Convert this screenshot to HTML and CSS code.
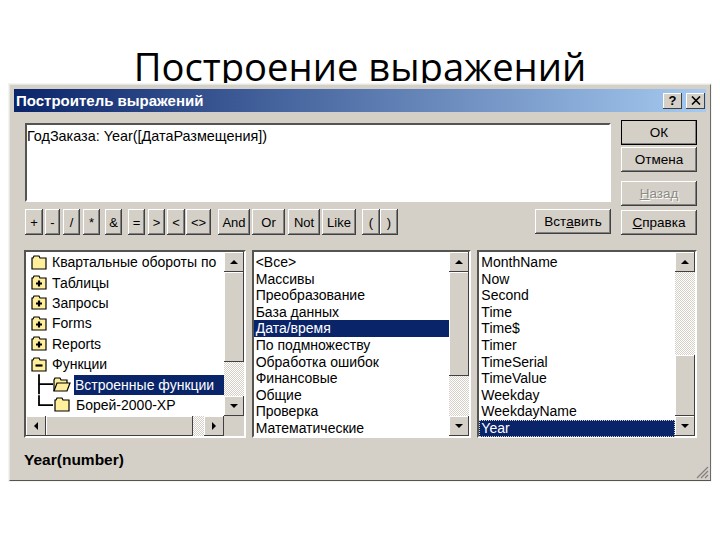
FILE: index.html
```html
<!DOCTYPE html>
<html lang="ru">
<head>
<meta charset="utf-8">
<title>Построение выражений</title>
<link rel="stylesheet" href="styles.css">
</head>
<body>
<header class="slide-head"><h1>Построение выражений</h1></header>
<section class="dialog">
  <div class="titlebar">
    <span class="title-text">Построитель выражений</span>
    <span class="cap-btn help">?</span>
    <span class="cap-btn close">
      <svg width="10" height="9" viewBox="0 0 10 9"><path d="M1 0.5 L9 8.5 M9 0.5 L1 8.5" stroke="#000" stroke-width="1.6"/></svg>
    </span>
  </div>
  <div class="client">
    <div class="top">
      <div class="editor-col">
        <div class="editor">ГодЗаказа: Year([ДатаРазмещения])</div>
        <div class="ops">
          <span class="op w18">+</span><span class="op w15 m2">-</span><span class="op w17 m3">/</span><span class="op w17 m3">*</span><span class="op w17 m5">&amp;</span><span class="op w17 m6">=</span><span class="op w17 m3">&gt;</span><span class="op w18 m2">&lt;</span><span class="op w25 m1">&lt;&gt;</span><span class="op w32 m7">And</span><span class="op w33 m2">Or</span><span class="op w32 m3">Not</span><span class="op w34 m2">Like</span><span class="op w18 m6">(</span><span class="op w18">)</span>
          <span class="btn insert">Вст<u>а</u>вить</span>
        </div>
      </div>
      <div class="side">
        <span class="btn default">ОК</span>
        <span class="btn">Отмена</span>
        <span class="btn disabled gap"><u>Н</u>азад</span>
        <span class="btn"><u>С</u>правка</span>
      </div>
    </div>
    <div class="lists">
      <div class="well tree-well">
        <div class="tree-body">
          <ul class="tree">
            <li><svg class="ic" viewBox="0 0 16 15"><path d="M1 14V3h1l1-2h5l1 2h6v11z" fill="#ffef9c" stroke="#000" stroke-width="1.2"/></svg>Квартальные обороты по</li>
            <li><svg class="ic" viewBox="0 0 16 15"><path d="M1 14V3h1l1-2h5l1 2h6v11z" fill="#ffef9c" stroke="#000" stroke-width="1.2"/><path d="M8 5.500v6M5 8.500h6" stroke="#000" stroke-width="2.200"/></svg>Таблицы</li>
            <li><svg class="ic" viewBox="0 0 16 15"><path d="M1 14V3h1l1-2h5l1 2h6v11z" fill="#ffef9c" stroke="#000" stroke-width="1.2"/><path d="M8 5.500v6M5 8.500h6" stroke="#000" stroke-width="2.200"/></svg>Запросы</li>
            <li><svg class="ic" viewBox="0 0 16 15"><path d="M1 14V3h1l1-2h5l1 2h6v11z" fill="#ffef9c" stroke="#000" stroke-width="1.2"/><path d="M8 5.500v6M5 8.500h6" stroke="#000" stroke-width="2.200"/></svg>Forms</li>
            <li><svg class="ic" viewBox="0 0 16 15"><path d="M1 14V3h1l1-2h5l1 2h6v11z" fill="#ffef9c" stroke="#000" stroke-width="1.2"/><path d="M8 5.500v6M5 8.500h6" stroke="#000" stroke-width="2.200"/></svg>Reports</li>
            <li><svg class="ic" viewBox="0 0 16 15"><path d="M1 14V3h1l1-2h5l1 2h6v11z" fill="#ffef9c" stroke="#000" stroke-width="1.2"/><path d="M4.500 8.500h7" stroke="#000" stroke-width="2.200"/></svg>Функции</li>
            <li class="sub"><svg class="branch" viewBox="0 0 15 20"><path d="M1 0v20M1 10h14" stroke="#000" stroke-width="1.800" fill="none"/></svg><svg class="ic" viewBox="0 0 18 15"><path d="M1 14V3l1-2h5l1 2h6v3" fill="#ffef9c" stroke="#000" stroke-width="1.200"/><path d="M1 14l3-8h13l-3 8z" fill="#ffef9c" stroke="#000" stroke-width="1.200"/></svg><span class="sel">Встроенные функции</span></li>
            <li class="sub"><svg class="branch" viewBox="0 0 15 20"><path d="M1 0v10h14" stroke="#000" stroke-width="1.800" fill="none"/></svg><svg class="ic" viewBox="0 0 18 15"><path d="M2 14V3h1l1-2h5l1 2h6v11z" fill="#ffef9c" stroke="#000" stroke-width="1.200"/></svg><span class="plain">Борей-2000-ХР</span></li>
          </ul>
          <div class="vbar">
            <span class="arrow"><i class="tri up"></i></span>
            <span class="thumb t1"></span>
            <span class="track"></span>
            <span class="arrow"><i class="tri down"></i></span>
          </div>
        </div>
        <div class="hbar">
          <span class="arrow"><i class="tri left"></i></span>
          <span class="hthumb"></span>
          <span class="htrack"></span>
          <span class="arrow"><i class="tri right"></i></span>
          <span class="corner"></span>
        </div>
      </div>
      <div class="well list-well">
        <ul class="list">
          <li>&lt;Все&gt;</li><li>Массивы</li><li>Преобразование</li><li>База данных</li><li class="on">Дата/время</li><li>По подмножеству</li><li>Обработка ошибок</li><li>Финансовые</li><li>Общие</li><li>Проверка</li><li>Математические</li>
        </ul>
        <div class="vbar">
          <span class="arrow"><i class="tri up"></i></span>
          <span class="thumb t2"></span>
          <span class="track"></span>
          <span class="arrow"><i class="tri down"></i></span>
        </div>
      </div>
      <div class="well list-well">
        <ul class="list">
          <li>MonthName</li><li>Now</li><li>Second</li><li>Time</li><li>Time$</li><li>Timer</li><li>TimeSerial</li><li>TimeValue</li><li>Weekday</li><li>WeekdayName</li><li class="on focus">Year</li>
        </ul>
        <div class="vbar">
          <span class="arrow"><i class="tri up"></i></span>
          <span class="track"></span>
          <span class="thumb t3"></span>
          <span class="arrow"><i class="tri down"></i></span>
        </div>
      </div>
    </div>
    <div class="status">
      <span>Year(number)</span>
      <svg class="grip" width="14" height="14" viewBox="0 0 14 14"><path d="M13 2L2 13M13 6L6 13M13 10L10 13" stroke="#808080" stroke-width="1.2"/></svg>
    </div>
  </div>
</section>
</body>
</html>
```
FILE: styles.css
```css
* { box-sizing: border-box; }
html, body { margin: 0; padding: 0; background: #fff; }
body { width: 720px; height: 540px; overflow: hidden; font-family: "Liberation Sans", Arial, sans-serif; }
ul { list-style: none; margin: 0; padding: 0; }

.slide-head { height: 84px; display: flex; justify-content: center; }
.slide-head h1 { margin: 0; padding-top: 43px; font: 400 38.2px/46px "Open Sans", sans-serif; color: #000; white-space: nowrap; height: 84px; }

.dialog { position: relative; margin-left: 9px; width: 702px; height: 397px; background: #d4d0c8; padding: 4px 4px 3px 4px; display: flex; flex-direction: column;
  border: 1px solid; border-color: #e8e6e0 #6a6a66 #55554f #e8e6e0; box-shadow: 0 0 0 1px #f4f4f2; }
.titlebar { height: 23px; flex: none; display: flex; align-items: center; padding: 0 1px 0 2px; background: linear-gradient(90deg, #0a246a, #a6caf0); }
.title-text { flex: 1; color: #fff; font-weight: 700; font-size: 15px; }
.cap-btn { width: 19px; height: 16px; margin-left: 4px; background: #d4d0c8; display: flex; align-items: center; justify-content: center; font-size: 13px; font-weight: 700; color: #000;
  box-shadow: inset -1px -1px 0 #404040, inset 1px 1px 0 #fff; }

.client { flex: 1; min-height: 0; display: flex; flex-direction: column; padding: 8px 8px 0 11px; font-size: 13px; color: #000; }
.top { display: flex; justify-content: space-between; }
.editor-col { width: 586px; padding-top: 3px; }
.editor { height: 79px; background: #fff; padding: 3px 0; font-size: 14.4px; line-height: 16px;
  border: 2px solid; border-color: #55554f #fff #fff #55554f; }
.ops { display: flex; margin-top: 7px; }
.op, .btn { display: flex; align-items: center; justify-content: center; background: #d4d0c8; white-space: nowrap;
  box-shadow: inset -1px -1px 0 #404040, inset 1px 1px 0 #fff, inset -2px -2px 0 #808080; }
.op { height: 26px; font-size: 13px; }
.w15 { width: 15px; } .w17 { width: 17px; } .w18 { width: 18px; } .w25 { width: 25px; }
.w32 { width: 32px; } .w33 { width: 33px; } .w34 { width: 34px; }
.m1 { margin-left: 1px; } .m2 { margin-left: 2px; } .m3 { margin-left: 3px; } .m5 { margin-left: 5px; } .m6 { margin-left: 6px; } .m7 { margin-left: 7px; }
.btn { width: 76px; height: 25px; font-size: 13.5px; }
.insert { margin-left: auto; }
.side { width: 76px; display: flex; flex-direction: column; gap: 2px; padding-top: 0; margin-right: 1px; }
.default { outline: 1px solid #000; outline-offset: -1px; }
.disabled { color: #8d8b85; text-shadow: 1px 1px 0 #fff; }
.gap { margin-top: 7px; }
.side .btn:last-child { margin-top: 2px; }

.lists { display: flex; gap: 6px; margin-top: 15px; height: 188px; margin-left: -1px; margin-right: 1px; }
.well { border: 2px solid; border-color: #55554f #fff #fff #55554f; background: #fff; }
.tree-well { width: 222px; display: flex; flex-direction: column; }
.list-well { width: 220px; display: flex; }
.tree-body { flex: 1; min-height: 0; display: flex; }
.tree { flex: 1; min-width: 0; padding: 0; overflow: hidden; }
.tree li { height: 20.4px; display: flex; align-items: center; padding-left: 5px; white-space: nowrap; font-size: 14px; }
.tree .ic { width: 16px; height: 15px; margin-right: 5px; flex: none; }
.tree .sub { padding-left: 12px; }
.branch { width: 15px; height: 20.4px; flex: none; }
.tree .sub .ic { width: 18px; margin-right: 3px; }
.sel, .on { background: #0a246a; color: #fff; }
.sel { flex: 1; padding-left: 1px; height: 20px; line-height: 20px; }
.plain { padding-left: 2px; }
.list { flex: 1; min-width: 0; padding-top: 2px; }
.list li { height: 16.6px; line-height: 16.6px; padding-left: 2px; font-size: 14px; white-space: nowrap; }
.focus { outline: 1px dotted #d4d0c8; outline-offset: -1px; }

.vbar { width: 20px; flex: none; display: flex; flex-direction: column; background-color: #ecebe6; background-image: repeating-conic-gradient(#d4d0c8 0 25%, #fff 0 50%); background-size: 2px 2px; }
.arrow { display: flex; align-items: center; justify-content: center; flex: none; width: 20px; height: 20px; background: #d4d0c8;
  box-shadow: inset -1px -1px 0 #404040, inset 1px 1px 0 #fff; }
.thumb { flex: none; background: #d4d0c8; box-shadow: inset -1px -1px 0 #404040, inset 1px 1px 0 #fff; }
.t1 { height: 90px; } .t2 { height: 104px; } .t3 { height: 61px; }
.track { flex: 1; }
.tri { width: 0; height: 0; display: block; border: 4px solid transparent; }
.up { border-top: 0; border-bottom-color: #000; }
.down { border-bottom: 0; border-top-color: #000; }
.left { border-left: 0; border-right-color: #000; }
.right { border-right: 0; border-left-color: #000; }

.hbar { flex: none; height: 20px; display: flex; background-image: repeating-conic-gradient(#d4d0c8 0 25%, #fff 0 50%); background-size: 2px 2px; }
.hthumb { width: 147px; flex: none; background: #d4d0c8; box-shadow: inset -1px -1px 0 #404040, inset 1px 1px 0 #fff; }
.htrack { flex: 1; }
.corner { width: 20px; flex: none; background: #d4d0c8; }

.status { flex: 1; display: flex; align-items: center; font-weight: 700; font-size: 15.5px; margin-left: -1px; padding-top: 4px; }
.grip { position: absolute; right: 1px; bottom: 1px; }
```
